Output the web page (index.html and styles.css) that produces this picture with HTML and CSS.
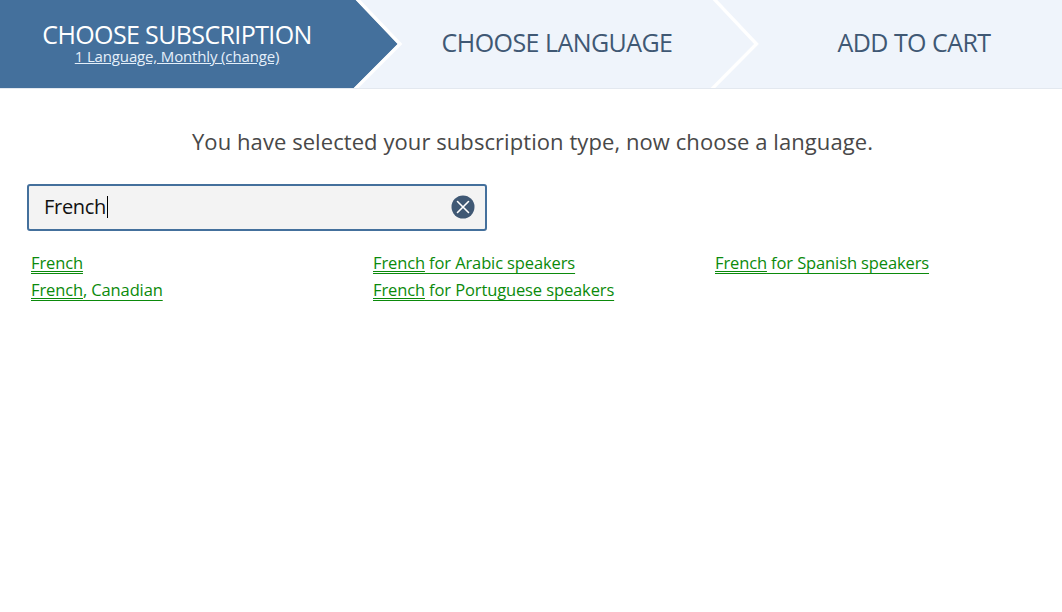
FILE: index.html
```html
<!DOCTYPE html>
<html lang="en">
<head>
<meta charset="utf-8">
<title>Choose language</title>
<link rel="stylesheet" href="styles.css">
</head>
<body>
<nav class="steps">
  <div class="step step-active">
    <div class="step-title">CHOOSE SUBSCRIPTION</div>
    <a class="step-sub" href="#">1 Language, Monthly (change)</a>
    <svg class="chevron" width="56" height="88" viewBox="-4 0 56 88"><path d="M-4 0H2L44 44L0 88H-4Z" fill="#44709c"/><path d="M2.100 -2L46 44L0.100 90" fill="none" stroke="#fff" stroke-width="3.400"/></svg>
  </div>
  <div class="step step-second">
    <div class="step-title">CHOOSE LANGUAGE</div>
    <svg class="chevron" width="56" height="88" viewBox="-4 0 56 88"><path d="M1.100 -2L44.500 44L-1.100 90" fill="none" stroke="#fff" stroke-width="3.400"/></svg>
  </div>
  <div class="step step-third">
    <div class="step-title">ADD TO CART</div>
  </div>
</nav>
<main class="content">
  <p class="lead">You have selected your subscription type, now choose a language.</p>
  <div class="search">
    <span class="search-text">French</span><span class="caret"></span>
    <svg class="clear" width="24" height="24" viewBox="0 0 24 24"><circle cx="12" cy="12" r="11.500" fill="#3f5874"/><path d="M6.500 6.500L17.500 17.500M17.500 6.500L6.500 17.500" stroke="#fff" stroke-width="1.600" stroke-linecap="round"/></svg>
  </div>
  <ul class="results">
    <li><a href="#"><span class="match">French</span></a></li>
    <li><a href="#"><span class="match">French</span> for Arabic speakers</a></li>
    <li><a href="#"><span class="match">French</span> for Spanish speakers</a></li>
    <li><a href="#"><span class="match">French</span>, Canadian</a></li>
    <li><a href="#"><span class="match">French</span> for Portuguese speakers</a></li>
  </ul>
</main>
</body>
</html>
```
FILE: styles.css
```css
* { box-sizing: border-box; }
html, body { margin: 0; padding: 0; background: #fff; }
body { font-family: "Open Sans", "Noto Sans", "Liberation Sans", sans-serif; color: #444; }
.steps { display: flex; height: 89px; border-bottom: 1px solid #e3e8ef; background: #eff4fb; }
.step { position: relative; display: flex; flex-direction: column; align-items: center; justify-content: center; height: 88px; }
.step-active { width: 354px; padding-bottom: 3px; background: #44709c; color: #fff; }
.step-second { width: 358px; padding: 0 42px 0 90px; }
.step-third { width: 350px; padding: 0 0 0 54px; }
.step-title { font-size: 25px; line-height: 30px; color: #3f5874; white-space: nowrap; letter-spacing: -0.55px; margin-bottom: 4px; }
.step-active .step-title { margin-bottom: 1px; color: #fff; font-weight: 500; line-height: 26px; letter-spacing: -0.62px; }
.step-sub { font-size: 15px; line-height: 16px; color: #e4effa; text-decoration: underline; white-space: nowrap; letter-spacing: -0.15px; }
.chevron { position: absolute; left: 100%; top: 0; margin-left: -4px; }
.content { padding: 0 27px; }
.lead { margin: 37px 0 0; padding-left: 3px; font-size: 22px; line-height: 30px; text-align: center; color: #484848; letter-spacing: 0.07px; }
.search { display: flex; align-items: center; width: 460px; height: 47px; margin-top: 28px; padding: 0 10px 2px 15px; border: 2px solid #44709c; border-radius: 3px; background: #f3f3f3; }
.search-text { font-size: 20px; color: #111; letter-spacing: -0.3px; }
.caret { width: 1px; height: 22px; margin-left: 1px; background: #000; }
.clear { margin-left: auto; }
.results { display: grid; grid-template-columns: repeat(3, 342px); grid-auto-rows: 27px; margin: 18px 0 0; padding: 0 0 0 4px; list-style: none; }
.results li { font-size: 16.500px; line-height: 27px; white-space: nowrap; letter-spacing: -0.12px; }
.results a { color: #0b8a0b; text-decoration: underline 1px; text-decoration-skip-ink: none; text-underline-offset: 4px; }
.match { text-decoration: underline 1px; text-decoration-skip-ink: none; text-underline-offset: 2px; }
```
